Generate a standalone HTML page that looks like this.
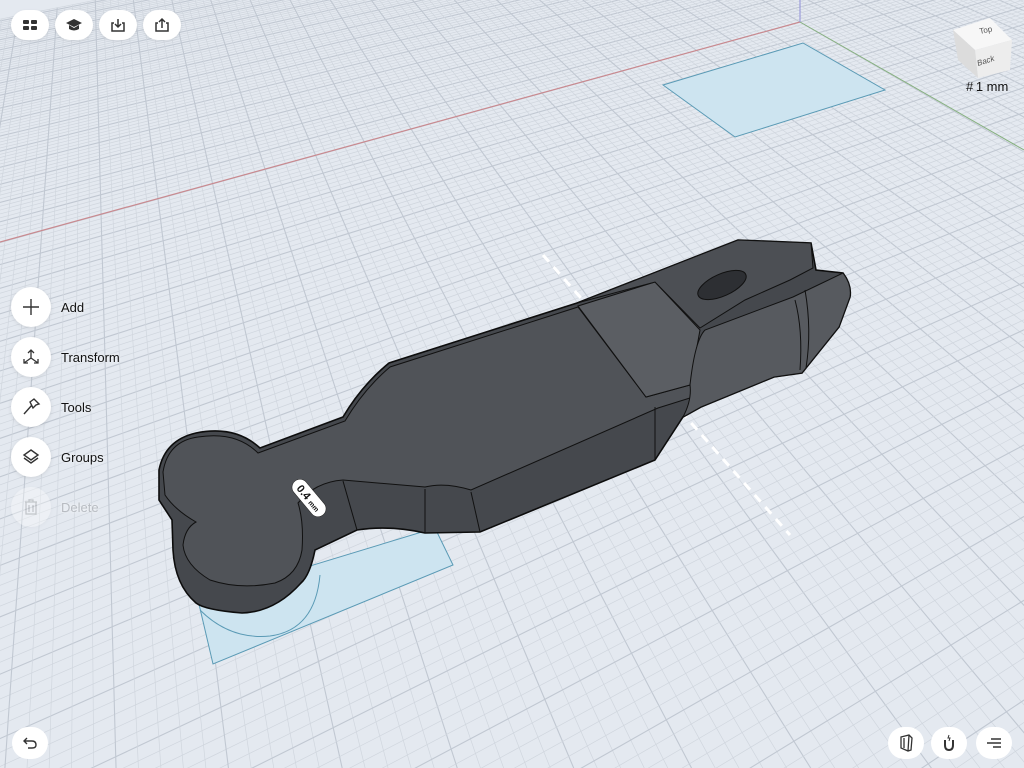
<!DOCTYPE html>
<html><head><meta charset="utf-8"><style>
html,body{margin:0;padding:0;width:1024px;height:768px;overflow:hidden;background:#e4e9f0;font-family:"Liberation Sans",sans-serif}
#bg{position:absolute;left:0;top:0;display:block}
.btn{position:absolute;background:#fff;border-radius:16px;width:38px;height:30px;display:flex;align-items:center;justify-content:center;box-shadow:0 1px 3px rgba(0,0,0,.08)}
.cb{position:absolute;width:40px;height:40px;border-radius:50%;background:#fff;display:flex;align-items:center;justify-content:center;box-shadow:0 1px 4px rgba(0,0,0,.1)}
.lbl{position:absolute;left:61px;font-size:13px;color:#111;text-shadow:0 0 3px #fff}
.rb{position:absolute;width:36px;height:32px;border-radius:16px;background:#fff;display:flex;align-items:center;justify-content:center}
</style></head><body>
<svg id="bg" width="1024" height="768" viewBox="0 0 1024 768">
<g id="grid" fill="none"></g>
<line x1="0" y1="242" x2="800" y2="22" stroke="#c98a90" stroke-width="1.2"/>
<line x1="800" y1="22" x2="1024" y2="150" stroke="#86b07f" stroke-width="1"/>
<line x1="800" y1="0" x2="800" y2="22" stroke="#8f8fd8" stroke-width="1"/>
<polygon points="663,85 803,43 885,90 735,137" fill="#cde4f0" stroke="#5a9ab5" stroke-width="1"/>
<polygon points="198,600 435,528 453,565 213,664" fill="#cde4f0" stroke="#5a9ab5" stroke-width="1"/>
<path d="M200,610 Q230,640 270,636 Q315,630 320,575" fill="none" stroke="#5a9ab5"/>
<g stroke="#fff" stroke-width="3" stroke-dasharray="9 7"><line x1="543" y1="255" x2="790" y2="535"/></g>
<path d="M159,470 Q165,440 196,433 Q235,425 260,448 L343,417 Q362,385 389,363 L577,303 L738,240 L811,243 L816,270 L843,273 Q852,285 850,297 L839,327 L802,373 L774,377 L701,407 L683,417 L655,460 L480,532 L425,533 Q390,525 357,530 L315,550 Q310,575 301,583 Q275,612 242,613 Q205,610 196,603 Q175,585 173,550 L172,520 L159,500 Z" fill="#45484d" stroke="#0d0d0d" stroke-width="1.6"/>
<path d="M163,472 Q168,441 198,437 Q236,431 258,453 L345,421 Q364,389 390,367 L578,307 L646,397 L690,385 Q694,390 690,398 L658,408 L471,490 Q445,482 425,487 L343,480 Q315,482 298,503 Q304,522 302,550 Q298,575 275,583 Q240,590 210,580 Q185,565 183,545 Q185,528 196,522 Q175,510 165,495 Z" fill="#505358" stroke="#111" stroke-width="1"/>
<path d="M578,306 L655,282 L700,330 L690,385 L646,397 Z" fill="#5b5e63" stroke="#111" stroke-width="1"/>
<path d="M577,303 L738,240 L811,243 L813,268 L790,280 L745,300 L700,328 L655,282 Z" fill="#4c4f54" stroke="#111" stroke-width="1"/>
<ellipse cx="722" cy="285" rx="26" ry="11" transform="rotate(-24 722 285)" fill="#2d2f33" stroke="#111"/>
<path d="M690,385 Q695,340 705,330 L793,297 L843,273 Q852,285 850,297 L839,327 L802,373 L774,377 L701,407 L683,417 Q692,400 690,385 Z" fill="#575a5f" stroke="#111" stroke-width="1"/>
<path d="M795,300 Q803,330 800,370 M805,290 Q812,330 806,368" stroke="#111" fill="none"/>
<path d="M343,481 L357,530 M425,489 L425,533 M471,492 L480,532 M655,407 L655,460" stroke="#111" fill="none"/>
<g transform="translate(309,498) rotate(50)"><rect x="-22" y="-8" width="44" height="16" rx="8" fill="#fff" stroke="#222" stroke-width=".5"/><text x="0" y="4" font-size="11" font-weight="bold" text-anchor="middle" fill="#111" font-family="Liberation Sans,sans-serif">0.4 <tspan font-size="7">mm</tspan></text></g>
<polygon points="953,30 990,18 1012,40 975,50" fill="#f7f7f7"/>
<polygon points="975,50 1012,40 1010,70 978,78" fill="#ededed"/>
<polygon points="953,30 975,50 978,78 958,60" fill="#dcdcdc"/>
<text x="980" y="34" font-size="8" fill="#555" transform="rotate(-12 980 34)">Top</text>
<text x="978" y="66" font-size="8" font-style="italic" fill="#555" transform="rotate(-18 978 66)">Back</text>
<text x="966" y="91" font-size="13" fill="#111">#&#8201;1 mm</text>
</svg>
<div class="btn" style="left:11px;top:10px"><svg width="16" height="12"><rect x="1" y="1" width="6" height="4" rx="1" fill="#333"/><rect x="9" y="1" width="6" height="4" rx="1" fill="#333"/><rect x="1" y="7" width="6" height="4" rx="1" fill="#333"/><rect x="9" y="7" width="6" height="4" rx="1" fill="#333"/></svg></div>
<div class="btn" style="left:55px;top:10px"><svg width="18" height="14"><path d="M1,5 L9,1 L17,5 L9,9 Z" fill="#333"/><path d="M4,7 L4,11 Q9,14 14,11 L14,7 L9,10 Z" fill="#333"/></svg></div>
<div class="btn" style="left:99px;top:10px"><svg width="16" height="16" fill="none" stroke="#333" stroke-width="1.5"><path d="M4,6 H2 V14 H14 V6 H12 M8,2 V10 M5,7 L8,10 L11,7"/></svg></div>
<div class="btn" style="left:143px;top:10px"><svg width="16" height="16" fill="none" stroke="#333" stroke-width="1.5"><path d="M4,6 H2 V14 H14 V6 H12 M8,11 V2 M5,5 L8,2 L11,5"/></svg></div>
<div class="cb" style="left:11px;top:287px"><svg width="20" height="20" stroke="#333" stroke-width="1.4"><path d="M10,2 V18 M2,10 H18"/></svg></div>
<div class="lbl" style="top:300px">Add</div>
<div class="cb" style="left:11px;top:337px"><svg width="20" height="20" fill="none" stroke="#333" stroke-width="1.3"><path d="M10,11 V3 M7,6 L10,3 L13,6 M10,11 L3,16 M3,12 V16 H7 M10,11 L17,16 M13,16 H17 V12"/></svg></div>
<div class="lbl" style="top:350px">Transform</div>
<div class="cb" style="left:11px;top:387px"><svg width="20" height="20" fill="none" stroke="#333" stroke-width="1.4"><path d="M3,17 L11,8 M9,5 L13,2 L18,7 L15,8 L12,11 Z"/></svg></div>
<div class="lbl" style="top:400px">Tools</div>
<div class="cb" style="left:11px;top:437px"><svg width="20" height="20" fill="none" stroke="#333" stroke-width="1.4"><path d="M10,3 L17,8 L10,13 L3,8 Z M3,11 L10,16 L17,11"/></svg></div>
<div class="lbl" style="top:450px">Groups</div>
<div class="cb" style="left:11px;top:487px;opacity:.35"><svg width="20" height="20" fill="none" stroke="#888" stroke-width="1.3"><path d="M4,5 H16 M8,5 V3 H12 V5 M5,5 V17 H15 V5 M8,8 V15 M12,8 V15"/></svg></div>
<div class="lbl" style="top:500px;color:#b8bcc2">Delete</div>
<div class="rb" style="left:12px;top:727px"><svg width="16" height="14" fill="none" stroke="#333" stroke-width="1.4"><path d="M5,2 L2,5 L5,8 M2,5 H10 Q14,5 14,9 Q14,12 10,12 H6"/></svg></div>
<div class="rb" style="left:888px;top:727px"><svg width="16" height="18" fill="none" stroke="#333" stroke-width="1.3"><path d="M3,3 L11,1 L14,4 L13,16 L10,17 L3,14 Z M11,1 L10,17 M6,4 V14"/></svg></div>
<div class="rb" style="left:931px;top:727px"><svg width="16" height="18" fill="none" stroke="#333" stroke-width="2"><path d="M4,6 V11 Q4,16 8,16 Q12,16 12,11 V6"/><path d="M8,1 L7,4 H9 L8,7" stroke-width="1"/></svg></div>
<div class="rb" style="left:976px;top:727px"><svg width="16" height="14" stroke="#333" stroke-width="1.4"><path d="M5,3 H15 M1,7 H15 M7,11 H15"/></svg></div>
<script>
(function(){
 var P=[[800,22],[-20,248],[-200,1350],[1400,370]];
 var x0=P[0][0],y0=P[0][1],x1=P[1][0],y1=P[1][1],x2=P[2][0],y2=P[2][1],x3=P[3][0],y3=P[3][1];
 var dx1=x1-x2,dx2=x3-x2,dy1=y1-y2,dy2=y3-y2,sx=x0-x1+x2-x3,sy=y0-y1+y2-y3;
 var d=dx1*dy2-dx2*dy1;var G=(sx*dy2-dx2*sy)/d,H=(dx1*sy-sx*dy1)/d;
 var m=[x1-x0+G*x1,x3-x0+H*x3,x0,y1-y0+G*y1,y3-y0+H*y3,y0,G,H];
 function pr(u,v){var w=m[6]*u+m[7]*v+1;if(w<0.22)return null;return [(m[0]*u+m[1]*v+m[2])/w,(m[3]*u+m[4]*v+m[5])/w];}
 var g=document.getElementById('grid'),s='',N=90,lo=-0.9,hi=2.0;
 function line(f,col,w){var pts=[];for(var k=0;k<=70;k++){var t=lo+(hi-lo)*k/70;var p=f(t);if(p&&Math.abs(p[0])<3000&&Math.abs(p[1])<3000)pts.push(p[0].toFixed(1)+','+p[1].toFixed(1));}
  if(pts.length>1)s+='<polyline points="'+pts.join(' ')+'" stroke="'+col+'" stroke-width="'+w+'"/>';}
 for(var i=Math.round(lo*N);i<=Math.round(hi*N);i++){var t=i/N;
  var maj=(i%5==0);var col=maj?'#c1c8d2':'#d0d6de',w=maj?1.1:0.7;
  line(function(q){return pr(t,q);},col,w);
  line(function(q){return pr(q,t);},col,w);}
 g.innerHTML=s;
})();
</script>
</body></html>
